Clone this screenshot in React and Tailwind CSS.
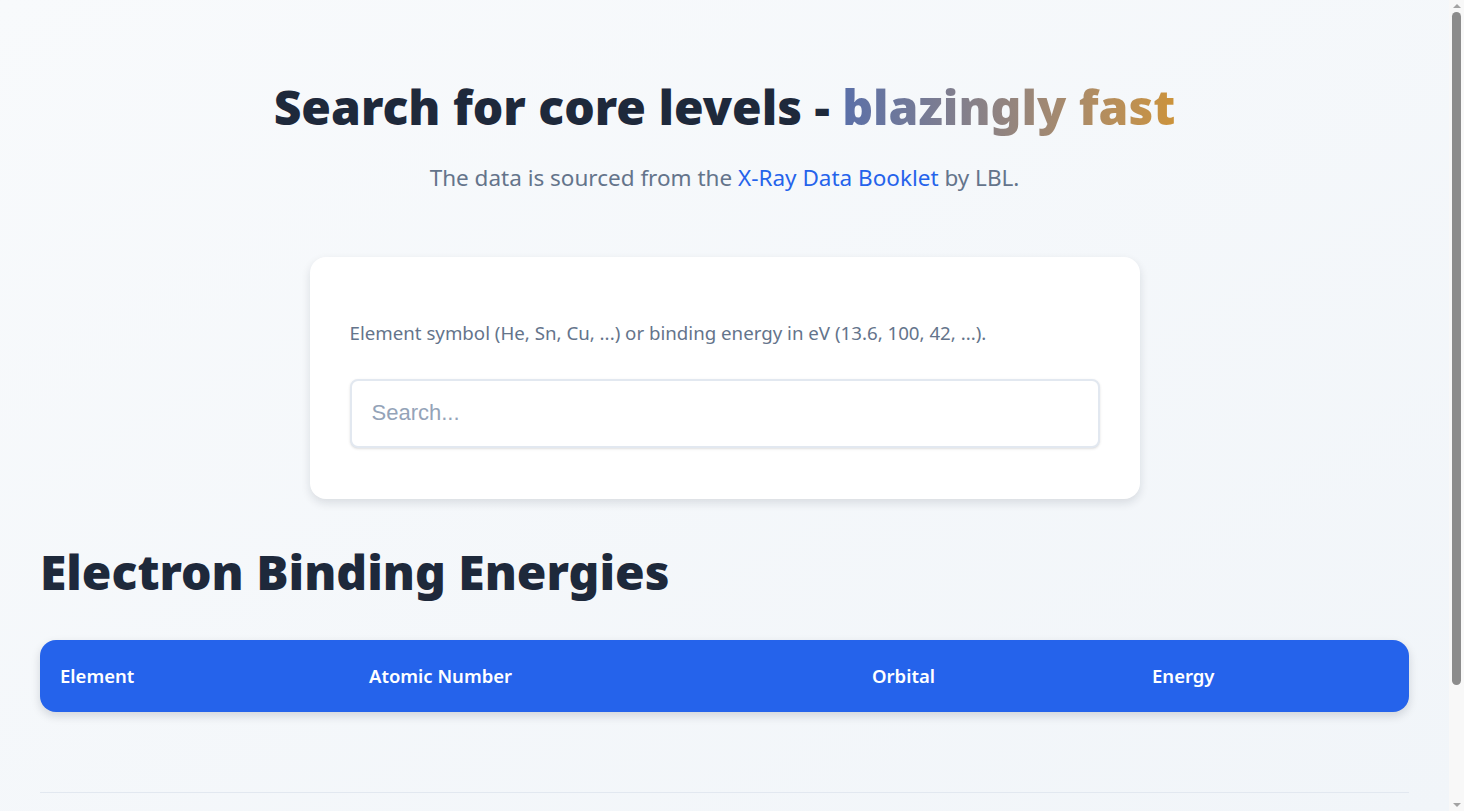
import React from "react";

const font = { fontFamily: '"Noto Sans", "Open Sans", sans-serif' };

const columns = [
  { label: "Element", w: "w-[309px]" },
  { label: "Atomic Number", w: "w-[503px]" },
  { label: "Orbital", w: "w-[280px]" },
  { label: "Energy", w: "flex-1" },
];

function Scrollbar() {
  return (
    <div className="flex h-[811px] w-[15px] shrink-0 flex-col items-center bg-[#f8f8f8]">
      <div className="mt-[4px] h-0 w-0 border-x-[4px] border-b-[4px] border-x-transparent border-b-[#a3a3a3]" />
      <div className="mt-[4px] h-[673px] w-[9px] rounded-full bg-[#8c8c8c]" />
      <div className="mt-auto mb-[4px] h-0 w-0 border-x-[4px] border-t-[4px] border-x-transparent border-t-[#a3a3a3]" />
    </div>
  );
}

export default function App() {
  return (
    <div className="flex h-[811px] overflow-hidden bg-gradient-to-br from-[#f8fafc] to-[#f1f5f9]" style={font}>
      <main className="min-w-0 flex-1 px-10 pt-[75px] text-[#1e293b]">
        <h1 className="text-center text-[48px] font-black leading-[64px] text-[#1e293b]">
          Search for core levels -{" "}
          <span className="bg-gradient-to-r from-[#5a6fa8] to-[#cc933a] bg-clip-text text-transparent">
            blazingly fast
          </span>
        </h1>
        <p className="mt-[22px] text-center text-[22.5px] text-[#64748b]">
          The data is sourced from the{" "}
          <a href="#" className="text-[#2563eb]">
            X-Ray Data Booklet
          </a>{" "}
          by LBL.
        </p>

        <div className="mx-auto mt-[62px] w-[830px] rounded-2xl bg-white px-10 pt-[62px] pb-[51px] shadow-[0_4px_10px_rgba(15,23,42,0.12)]">
          <label className="block text-[18.7px] leading-7 text-[#64748b]">
            Element symbol (He, Sn, Cu, ...) or binding energy in eV (13.6, 100, 42, ...).
          </label>
          <input
            type="text"
            placeholder="Search..."
            className="mt-[32px] h-[69px] w-full rounded-lg border-2 border-[#e2e8f0] bg-white px-5 text-[22px] shadow-sm outline-none placeholder:text-[#94a3b8]"
            style={{ fontFamily: '"Liberation Sans", Arial, sans-serif' }}
          />
        </div>

        <h2 className="mt-[36px] text-[48px] font-black leading-[74px] text-[#1e293b]">
          Electron Binding Energies
        </h2>

        <div className="mt-[31px] flex h-[72px] items-center rounded-2xl bg-[#2563eb] shadow-[0_4px_10px_rgba(15,23,42,0.15)]">
          {columns.map((c) => (
            <div key={c.label} className={`${c.w} px-5 text-[18.5px] font-semibold text-white`}>
              {c.label}
            </div>
          ))}
        </div>

        <div className="mt-[80px] border-t border-[#e2e8f0]" />
      </main>
      <Scrollbar />
    </div>
  );
}
